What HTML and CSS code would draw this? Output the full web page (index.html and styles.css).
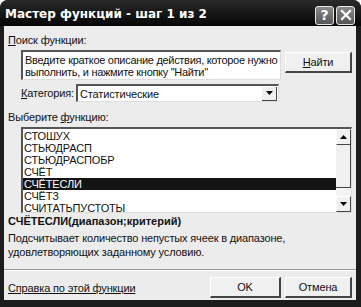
FILE: index.html
```html
<!DOCTYPE html>
<html lang="ru">
<head>
    <meta charset="UTF-8">
    <title>Мастер функций - шаг 1 из 2</title>
    <link rel="stylesheet" href="styles.css">
</head>
<body>
    <div class="window">
        <div class="titlebar">
            <span class="title">Мастер функций - шаг 1 из 2</span>
            <div class="caption-btns">
                <span class="cap-btn">?</span>
                <span class="cap-btn">
                    <svg width="12" height="12" viewBox="0 0 12 12"><path d="M2 2 L10 10 M10 2 L2 10" stroke="#fff" stroke-width="2.2" stroke-linecap="square"/></svg>
                </span>
            </div>
        </div>
        <div class="body">
            <div class="label"><u>П</u>оиск функции:</div>
            <div class="search-row">
                <div class="textbox">Введите краткое описание действия, которое нужно<br>выполнить, и нажмите кнопку "Найти"</div>
                <div class="btn find-btn"><u>Н</u>айти</div>
            </div>
            <div class="cat-row">
                <span><u>К</u>атегория:</span>
                <div class="select">
                    <span>Статистические</span>
                    <span class="drop"><svg width="7" height="4" viewBox="0 0 7 4"><path d="M0 0 H7 L3.5 4 Z" fill="#000"/></svg></span>
                </div>
            </div>
            <div class="label list-label">Выберите <u>ф</u>ункцию:</div>
            <div class="listbox">
                <ul class="items">
                    <li>СТОШУХ</li>
                    <li>СТЬЮДРАСП</li>
                    <li>СТЬЮДРАСПОБР</li>
                    <li>СЧЁТ</li>
                    <li class="selected">СЧЁТЕСЛИ</li>
                    <li>СЧЁТЗ</li>
                    <li>СЧИТАТЬПУСТОТЫ</li>
                </ul>
                <div class="scrollbar">
                    <div class="sb-btn"><svg width="7" height="4" viewBox="0 0 7 4"><path d="M0 4 H7 L3.5 0 Z" fill="#000"/></svg></div>
                    <div class="sb-thumb"></div>
                    <div class="sb-track"></div>
                    <div class="sb-btn"><svg width="7" height="4" viewBox="0 0 7 4"><path d="M0 0 H7 L3.5 4 Z" fill="#000"/></svg></div>
                </div>
            </div>
            <div class="fname">СЧЁТЕСЛИ(диапазон;критерий)</div>
            <div class="desc">Подсчитывает количество непустых ячеек в диапазоне,<br>удовлетворяющих заданному условию.</div>
            <div class="sep"></div>
            <div class="footer">
                <span class="help">Справка по этой функции</span>
                <div class="btn ok-btn">OK</div>
                <div class="btn">Отмена</div>
            </div>
        </div>
    </div>
</body>
</html>
```

FILE: styles.css
```css
body {
    margin: 0;
    background-color: #fff;
    font-family: "Liberation Sans", Arial, sans-serif;
    font-size: 11px;
    letter-spacing: -0.15px;
    color: #111;
}

.window {
    width: 361px;
    height: 307px;
    background-color: #1c1c1c;
    border-radius: 8px 8px 0 0;
    padding: 0 5px 7px 4px;
    box-sizing: border-box;
    display: flex;
    flex-direction: column;
}

.titlebar {
    height: 26px;
    display: flex;
    align-items: center;
    justify-content: space-between;
    background: linear-gradient(#2a2a2a, #050505);
    margin: 0 -5px 0 -4px;
    padding: 0 6px 0 5px;
    border-radius: 8px 8px 0 0;
}

.title {
    color: #fff;
    font-family: "DejaVu Sans", sans-serif;
    font-weight: bold;
    font-size: 12px;
    letter-spacing: 0;
    margin-top: 2px;
}

.caption-btns {
    display: flex;
    gap: 2px;
    margin-top: 4px;
}

.cap-btn {
    width: 17px;
    height: 17px;
    border: 1px solid #e8e8e8;
    border-radius: 3px;
    background: linear-gradient(#8a8a8a, #555);
    color: #fff;
    font-family: "DejaVu Sans", sans-serif;
    font-weight: bold;
    font-size: 14px;
    display: flex;
    align-items: center;
    justify-content: center;
}

.body {
    flex: 1;
    background-color: #ececec;
    padding: 8px 4px 0 4px;
    display: flex;
    flex-direction: column;
}

.label {
    line-height: 13px;
}

.search-row {
    display: flex;
    justify-content: space-between;
    align-items: flex-start;
    margin: 3px 0 0 13px;
}

.textbox {
    width: 260px;
    height: 30px;
    box-sizing: border-box;
    background-color: #fff;
    border-top: 2px solid #555;
    border-left: 2px solid #555;
    border-right: 1px solid #ddd;
    border-bottom: 1px solid #ddd;
    padding: 2px 2px;
    line-height: 12px;
    white-space: nowrap;
    letter-spacing: -0.3px;
    overflow: hidden;
}

.btn {
    width: 67px;
    height: 21px;
    box-sizing: border-box;
    display: flex;
    align-items: center;
    justify-content: center;
    background-color: #f0f0f0;
    border-top: 1px solid #fff;
    border-left: 1px solid #fff;
    border-right: 2px solid #444;
    border-bottom: 2px solid #444;
}

.find-btn {
    margin-top: 2px;
}

.cat-row {
    display: flex;
    align-items: center;
    gap: 2px;
    margin: 4px 0 0 13px;
}

.select {
    width: 203px;
    height: 18px;
    box-sizing: border-box;
    display: flex;
    align-items: center;
    justify-content: space-between;
    background-color: #fff;
    border-top: 2px solid #555;
    border-left: 2px solid #555;
    border-right: 1px solid #ddd;
    border-bottom: 1px solid #ddd;
    padding-left: 2px;
}

.drop {
    width: 15px;
    height: 14px;
    box-sizing: border-box;
    display: flex;
    align-items: center;
    justify-content: center;
    background-color: #f0f0f0;
    border-right: 1px solid #444;
    border-bottom: 1px solid #444;
    margin-right: 1px;
}

.list-label {
    margin-top: 9px;
}

.listbox {
    height: 86px;
    box-sizing: border-box;
    margin: 3px 0 0 13px;
    display: flex;
    background-color: #fff;
    border-top: 2px solid #555;
    border-left: 2px solid #555;
    border-right: 1px solid #ddd;
    border-bottom: 1px solid #ddd;
    overflow: hidden;
}

.items {
    flex: 1;
    list-style: none;
    margin: 0;
    padding: 1px 0 0 0;
}

.items li {
    height: 12px;
    line-height: 12px;
    padding-left: 1px;
}

.items li.selected {
    background-color: #141414;
    color: #fff;
}

.scrollbar {
    width: 15px;
    display: flex;
    flex-direction: column;
    background-color: #f4f4f4;
}

.sb-btn {
    height: 16px;
    box-sizing: border-box;
    display: flex;
    align-items: center;
    justify-content: center;
    background-color: #f0f0f0;
    border-top: 1px solid #fff;
    border-left: 1px solid #fff;
    border-right: 1px solid #444;
    border-bottom: 1px solid #444;
}

.sb-thumb {
    height: 43px;
    box-sizing: border-box;
    background-color: #f0f0f0;
    border-right: 1px solid #444;
    border-bottom: 1px solid #444;
}

.sb-track {
    flex: 1;
}

.fname {
    font-weight: bold;
    font-size: 11px;
    letter-spacing: 0;
    line-height: 13px;
    margin: 2px 0 0 0;
}

.desc {
    line-height: 14px;
    margin: 3px 0 0 0;
}

.sep {
    height: 0;
    border-top: 1px solid #999;
    border-bottom: 1px solid #fff;
    margin: 10px -4px 0 -4px;
}

.footer {
    display: flex;
    align-items: center;
    gap: 4px;
    margin-top: 6px;
}

.help {
    flex: 1;
    text-decoration: underline;
}

.ok-btn {
    width: 71px;
}
```
